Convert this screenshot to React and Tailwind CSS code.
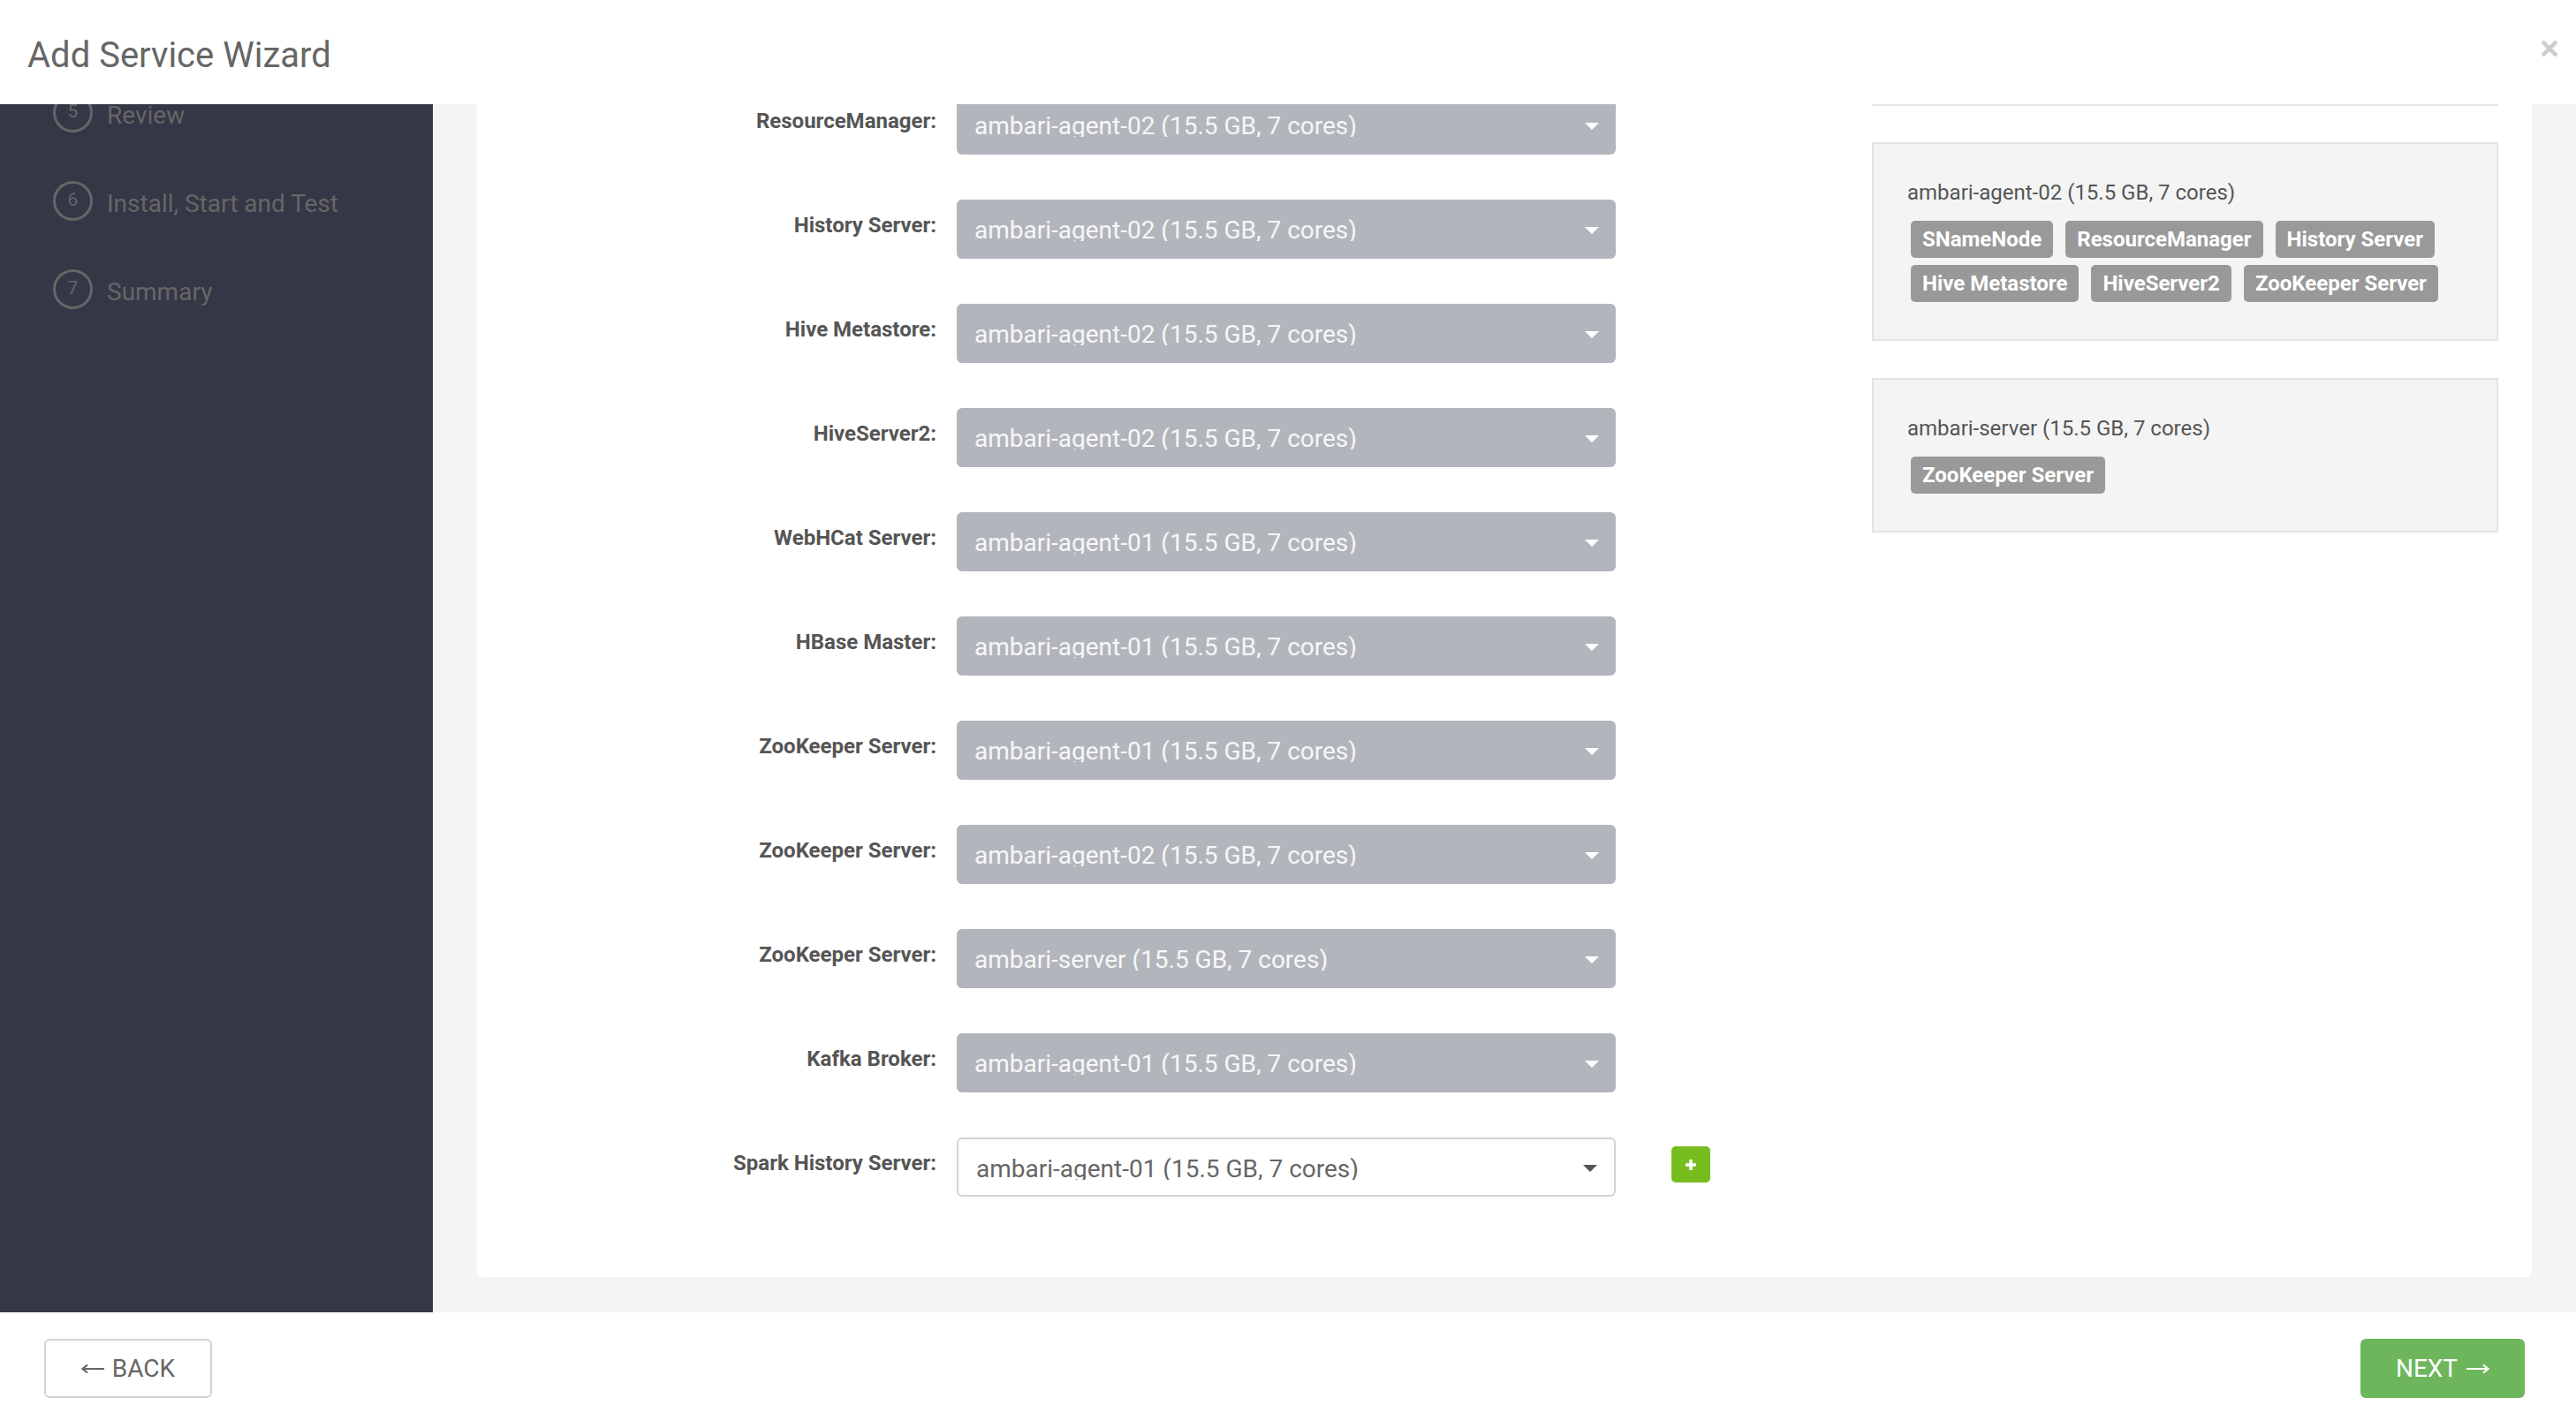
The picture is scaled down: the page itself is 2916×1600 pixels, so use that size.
import React from 'react';

const STEPS = [
    { num: 5, label: 'Review' },
    { num: 6, label: 'Install, Start and Test' },
    { num: 7, label: 'Summary' }
];

const MASTERS = [
    { label: 'ResourceManager:', host: 'ambari-agent-02 (15.5 GB, 7 cores)' },
    { label: 'History Server:', host: 'ambari-agent-02 (15.5 GB, 7 cores)' },
    { label: 'Hive Metastore:', host: 'ambari-agent-02 (15.5 GB, 7 cores)' },
    { label: 'HiveServer2:', host: 'ambari-agent-02 (15.5 GB, 7 cores)' },
    { label: 'WebHCat Server:', host: 'ambari-agent-01 (15.5 GB, 7 cores)' },
    { label: 'HBase Master:', host: 'ambari-agent-01 (15.5 GB, 7 cores)' },
    { label: 'ZooKeeper Server:', host: 'ambari-agent-01 (15.5 GB, 7 cores)' },
    { label: 'ZooKeeper Server:', host: 'ambari-agent-02 (15.5 GB, 7 cores)' },
    { label: 'ZooKeeper Server:', host: 'ambari-server (15.5 GB, 7 cores)' },
    { label: 'Kafka Broker:', host: 'ambari-agent-01 (15.5 GB, 7 cores)' },
    { label: 'Spark History Server:', host: 'ambari-agent-01 (15.5 GB, 7 cores)', editable: true }
];

const HOSTS = [
    {
        name: 'ambari-agent-02 (15.5 GB, 7 cores)',
        components: ['SNameNode', 'ResourceManager', 'History Server', 'Hive Metastore', 'HiveServer2', 'ZooKeeper Server']
    },
    {
        name: 'ambari-server (15.5 GB, 7 cores)',
        components: ['ZooKeeper Server']
    }
];

const Caret = ({ color }) => (
    <svg width="16" height="8" viewBox="0 0 16 8" className="shrink-0">
        <path d="M0 0 H16 L8 8 Z" fill={color} />
    </svg>
);

// long thin arrow used on the footer buttons
const Arrow = ({ dir, color }) => (
    <svg width="27" height="12" viewBox="0 0 27 12" className="shrink-0">
        {dir === 'left' ? (
            <path d="M26 6 H2 M7 1.5 L1.5 6 L7 10.5" stroke={color} strokeWidth="2.2" fill="none" />
        ) : (
            <path d="M1 6 H25 M20 1.5 L25.5 6 L20 10.5" stroke={color} strokeWidth="2.2" fill="none" />
        )}
    </svg>
);

const HostSelect = ({ host, editable }) => {
    if (editable) {
        return (
            <div className="ml-[23px] w-[746px] h-[67px] rounded-[6px] border-2 border-[#d0d3d7] bg-white flex items-start pt-[20px] pl-[20px] pr-[19px]">
                <span className="block h-[26px] leading-[28px] overflow-hidden text-[28px] text-[#666]">{host}</span>
                <div className="ml-auto mt-[9px]">
                    <Caret color="#555" />
                </div>
            </div>
        );
    }
    return (
        <div className="ml-[23px] w-[746px] h-[67px] rounded-[6px] bg-[#b2b6bc] flex items-start pt-[21px] pl-[20px] pr-[19px]">
            <span className="block h-[26px] leading-[28px] overflow-hidden text-[28px] text-[#f7f7f7]">{host}</span>
            <div className="ml-auto mt-[10px]">
                <Caret color="#ffffff" />
            </div>
        </div>
    );
};

const App = () => {
    return (
        <div className="w-[2916px] h-[1600px] flex flex-col bg-white overflow-hidden font-[Roboto,sans-serif]">
            <header className="h-[118px] shrink-0 flex items-center pl-[31px] pr-[19px] bg-white">
                <h1 className="pt-[8px] text-[40px] text-[#666] font-normal">Add Service Wizard</h1>
                <button className="ml-auto mt-[-8px]">
                    <svg width="22" height="22" viewBox="0 0 22 22">
                        <path d="M3 3 L19 19 M19 3 L3 19" stroke="#cdcdcd" strokeWidth="4.5" />
                    </svg>
                </button>
            </header>

            <div className="flex flex-1 min-h-0">
                <aside className="w-[490px] shrink-0 bg-[#353746] overflow-hidden">
                    <ul className="mt-[-41px]">
                        {STEPS.map((step) => (
                            <li key={step.num} className="h-[100px] flex items-center pl-[60px] gap-[16px]">
                                <div className="w-[45px] h-[45px] rounded-full border-[3px] border-[#666] flex items-center justify-center text-[21px] text-[#666]">
                                    {step.num}
                                </div>
                                <span className="pt-[8px] text-[28px] text-[#666]">{step.label}</span>
                            </li>
                        ))}
                    </ul>
                </aside>

                <main className="flex-1 bg-[#f4f4f4] overflow-hidden px-[50px]">
                    <div className="mt-[-40px] bg-white rounded-[6px] flex">
                        <div className="w-[1579px] pt-[30px] pb-[40px] flex flex-col">
                            {MASTERS.map((row, i) => (
                                <div key={i} className="h-[118px] flex items-start">
                                    <label className="w-[520px] text-right pt-[12px] text-[24px] leading-[34px] font-bold text-[#555]">
                                        {row.label}
                                    </label>
                                    <HostSelect host={row.host} editable={row.editable} />
                                    {row.editable && (
                                        <button className="ml-[63px] mt-[10px] w-[44px] h-[41px] rounded-[5px] bg-[#78bd1f] flex items-center justify-center">
                                            <svg width="14" height="14" viewBox="0 0 14 14">
                                                <path d="M7 1 V13 M1 7 H13" stroke="#ffffff" strokeWidth="3.5" />
                                            </svg>
                                        </button>
                                    )}
                                </div>
                            ))}
                        </div>

                        <div className="w-[709px] pt-[40px]">
                            <div className="h-[2px] bg-[#e5e5e5]" />
                            {HOSTS.map((host, i) => (
                                <div
                                    key={host.name}
                                    className={`${i === 0 ? 'mt-[41px]' : 'mt-[42px]'} border-2 border-[#e3e3e3] bg-[#f4f4f4] px-[38px] pt-[38px] pb-[42px]`}
                                >
                                    <div className="text-[24px] leading-[34px] text-[#555]">{host.name}</div>
                                    <div className="mt-[15px] pl-[4px] flex flex-wrap gap-x-[14px] gap-y-[8px]">
                                        {host.components.map((c) => (
                                            <span key={c} className="h-[42px] px-[13px] rounded-[5px] bg-[#999] text-white text-[24px] font-bold flex items-center">
                                                {c}
                                            </span>
                                        ))}
                                    </div>
                                </div>
                            ))}
                        </div>
                    </div>
                </main>
            </div>

            <footer className="h-[114px] shrink-0 bg-white flex items-start justify-between pt-[30px] pl-[50px] pr-[58px]">
                <button className="w-[190px] h-[67px] rounded-[6px] border-2 border-[#d0d3d7] bg-white text-[28px] text-[#666] flex items-center justify-center gap-[8px]">
                    <Arrow dir="left" color="#666" />
                    <span>BACK</span>
                </button>
                <button className="w-[186px] h-[67px] rounded-[6px] bg-[#6db65b] text-[28px] text-white flex items-center justify-center gap-[9px]">
                    <span>NEXT</span>
                    <Arrow dir="right" color="#ffffff" />
                </button>
            </footer>
        </div>
    );
};

export default App;
